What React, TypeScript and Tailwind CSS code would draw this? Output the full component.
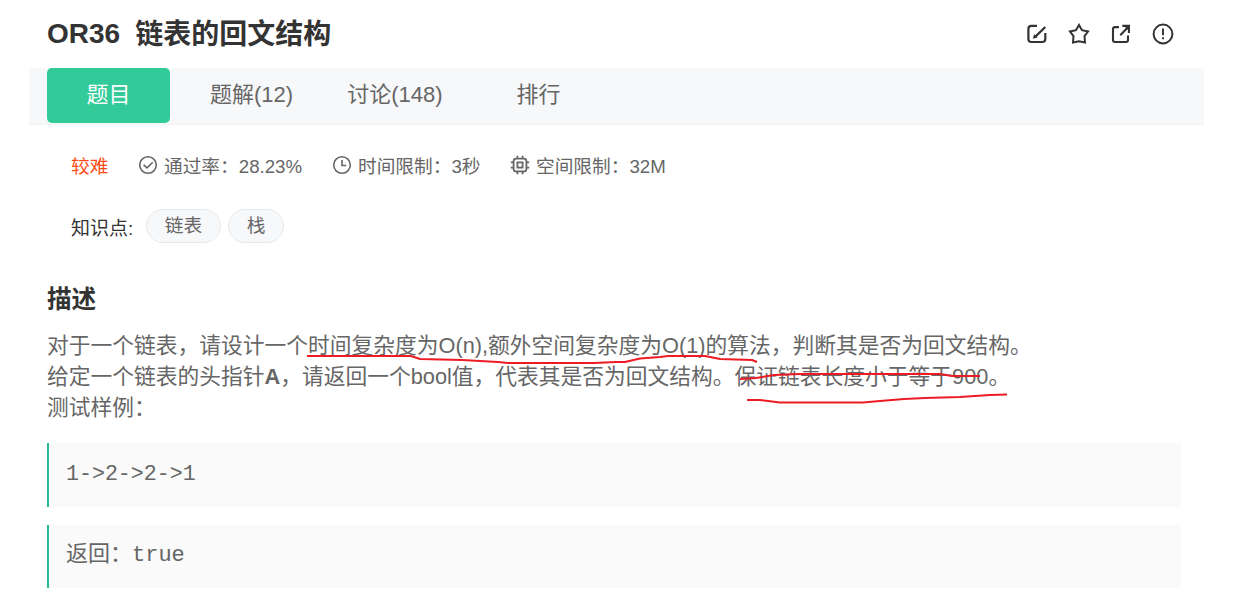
import React from "react";

const EditIcon = () => (
  <svg className="size-5" viewBox="0 0 20 20" fill="none" stroke="currentColor" strokeWidth="2.2">
    <path d="M10 1.9H4.4Q1.4 1.9 1.4 4.9V15Q1.4 18 4.4 18H15.3Q18.3 18 18.3 15V9" />
    <path d="M18.3 3L8.4 12.6" />
    <path d="M5.7 14.8L7.2 10.3L10.5 13.5Z" fill="currentColor" stroke="none" />
  </svg>
);

const StarIcon = () => (
  <svg className="size-[22px]" viewBox="0 0 22 22" fill="none" stroke="currentColor" strokeWidth="2">
    <path d="M11 1.9L14 7.2L20 8.5L16.5 13.1L17 19.5L11 18.2L5 19.5L5.5 13.1L2 8.5L8 7.2Z" />
  </svg>
);

const ShareIcon = () => (
  <svg className="size-5" viewBox="0 0 20 20" fill="none" stroke="currentColor" strokeWidth="2.1">
    <path d="M8 3.1H4Q2 3.1 2 5.1V16Q2 18 4 18H15Q17 18 17 16V11.5" />
    <path d="M9.3 11.2L17.2 3.1" />
    <path d="M11.3 0.8H19V9H16.8L17 6L14 3H11.3Z" fill="currentColor" stroke="none" />
  </svg>
);

const AlertIcon = () => (
  <svg className="size-[22px]" viewBox="0 0 22 22" fill="none" stroke="currentColor" strokeWidth="2">
    <circle cx="11" cy="11" r="9.4" />
    <path d="M11 5.5V12.3M11 14.2V16.2" strokeWidth="1.9" />
  </svg>
);

const CheckIcon = () => (
  <svg className="size-5" viewBox="0 0 20 20" fill="none" stroke="currentColor" strokeWidth="1.6">
    <circle cx="10" cy="10" r="8.3" />
    <path d="M5.7 9.8L9 12.9L14.8 7.2" />
  </svg>
);

const ClockIcon = () => (
  <svg className="size-5" viewBox="0 0 20 20" fill="none" stroke="currentColor" strokeWidth="1.6">
    <circle cx="10" cy="10" r="8.3" />
    <path d="M10 5V10.5H14.2" />
  </svg>
);

const ChipIcon = () => (
  <svg className="size-5" viewBox="0 0 20 20" fill="none" stroke="currentColor" strokeWidth="1.8">
    <rect x="3.6" y="3.6" width="12.8" height="12.8" rx="2.5" />
    <rect x="7.4" y="7.4" width="5.2" height="5.2" />
    <path d="M7.4 0.8V4M12.6 0.8V4M7.4 16V19.200M12.6 16V19.200M0.8 7.4H4M0.8 12.6H4M16 7.4H19.200M16 12.6H19.200" />
  </svg>
);

const Meta: React.FC<{ icon: React.ReactNode; text: string; className: string }> = ({ icon, text, className }) => (
  <div className={`flex items-center gap-[6px] ${className}`}>
    <span className="-mt-[4px]">{icon}</span>
    <span>{text}</span>
  </div>
);

const CodeBlock: React.FC<{ children: React.ReactNode; className: string }> = ({ children, className }) => (
  <pre
    className={`ml-[47px] w-[1134px] border-l-2 border-[#25bb9b] bg-[#fafafa] pl-[17px] font-['Liberation_Mono','Noto_Sans_CJK_SC',monospace] text-[#666] ${className}`}
  >
    {children}
  </pre>
);

const App: React.FC = () => (
  <div className="relative h-[606px] w-[1248px] overflow-hidden bg-white font-['Liberation_Sans','Noto_Sans_CJK_SC',sans-serif] whitespace-nowrap text-[#666]">
    <header className="flex h-[68px] items-center justify-between pr-[74px] pl-[47px] text-[#333]">
      <h1 className="flex gap-[15px] text-[28px] leading-[68px] font-bold">
        <span>OR36</span>
        <span className="pt-px">链表的回文结构</span>
      </h1>
      <div className="-mt-px flex items-center gap-[21px]">
        <EditIcon />
        <StarIcon />
        <ShareIcon />
        <AlertIcon />
      </div>
    </header>

    <nav className="ml-[29px] flex h-[57px] w-[1175px] border-b border-[#f1f2f4] bg-[#f7f8fa] pl-[18px] text-[22px] leading-[54px]">
      <a className="h-[55px] w-[123px] rounded-[5px] bg-[#32ca99] text-center text-white">题目</a>
      <a className="ml-[40px]">题解(12)</a>
      <a className="ml-[54px]">讨论(148)</a>
      <a className="ml-[74px]">排行</a>
    </nav>

    <div className="flex h-[83px] items-center pl-[71px] text-[18.7px] leading-[28px]">
      <span className="w-[67px] text-[#fc4c12]">较难</span>
      <Meta className="w-[194px]" icon={<CheckIcon />} text="通过率：28.23%" />
      <Meta className="w-[178px]" icon={<ClockIcon />} text="时间限制：3秒" />
      <Meta className="" icon={<ChipIcon />} text="空间限制：32M" />
    </div>

    <div className="flex h-[36px] pl-[71px] text-[18.7px]">
      <span className="w-[75px] pt-[7px] text-[19px] leading-[28px] text-[#333]">知识点:</span>
      <span className="mt-px h-[34px] w-[75px] rounded-full border border-[#e7e9ec] bg-[#f7f8fa] text-center leading-[31px]">链表</span>
      <span className="mt-px ml-[7px] h-[34px] w-[56px] rounded-full border border-[#e7e9ec] bg-[#f7f8fa] text-center leading-[31px]">栈</span>
    </div>

    <h2 className="mt-[38px] ml-[47px] text-[24.6px] leading-[36px] font-bold text-[#333]">描述</h2>
    <div className="mt-[12px] ml-[47px] text-[21.76px] leading-[31.2px]">
      <p>对于一个链表，请设计一个时间复杂度为O(n),额外空间复杂度为O(1)的算法，判断其是否为回文结构。</p>
      <p>给定一个链表的头指针<b>A</b>，请返回一个bool值，代表其是否为回文结构。保证链表长度小于等于900。</p>
      <p>测试样例：</p>
    </div>

    <CodeBlock className="mt-[19px] h-[64px] text-[21.600px] leading-[63px]">{"1->2->2->1"}</CodeBlock>
    <CodeBlock className="mt-[18px] h-[63px] text-[22px] leading-[61px]">返回：true</CodeBlock>

    {/* red pen strokes over the description */}
    <svg
      className="pointer-events-none absolute top-[320px] left-[300px] h-[100px] w-[720px]"
      viewBox="300 320 720 100"
      fill="none"
      stroke="#ed1c24"
      strokeWidth="2"
      strokeLinejoin="round"
    >
      <path d="M307 356H411L420 359L462 360L498 362L508 363H594L616 362L625 362L640 358.500L660 357L668 356H705L720 359L752 360L757 362" />
      <path d="M740 379L756 378L774 375L800 374H940L952 376H980" />
      <path d="M747 400H760L780 402.500H863L880 401L904 399L925 398L960 397L990 395L1007 394.500" />
    </svg>
  </div>
);

export default App;
